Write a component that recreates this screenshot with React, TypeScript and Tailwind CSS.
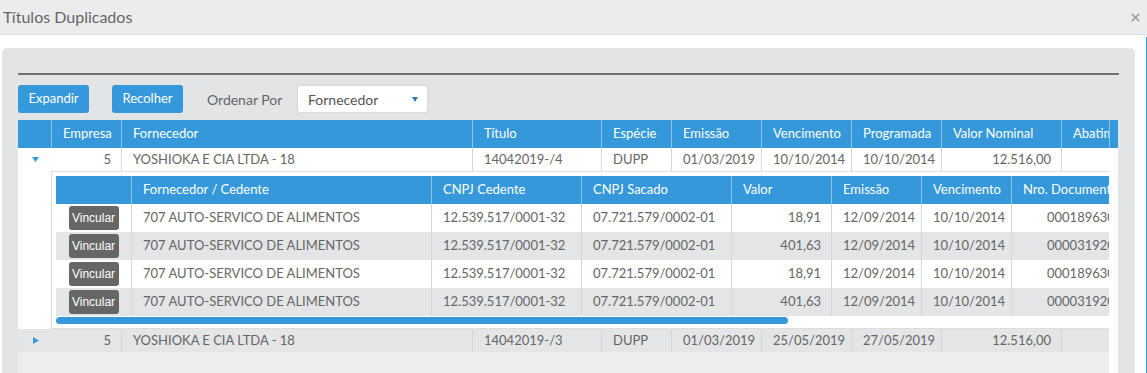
import { X } from "lucide-react";

type Col = { label: string; cls: string; right?: boolean };

const mainCols: Col[] = [
  { label: "", cls: "w-[33px]" },
  { label: "Empresa", cls: "w-[70px]", right: true },
  { label: "Fornecedor", cls: "w-[351px]" },
  { label: "Título", cls: "w-[129px]" },
  { label: "Espécie", cls: "w-[70px]" },
  { label: "Emissão", cls: "w-[90px]" },
  { label: "Vencimento", cls: "w-[90px]" },
  { label: "Programada", cls: "w-[90px]" },
  { label: "Valor Nominal", cls: "w-[120px]", right: true },
  { label: "Abatimento", cls: "w-[90px]" },
];

const innerCols: Col[] = [
  { label: "", cls: "w-[75px]" },
  { label: "Fornecedor / Cedente", cls: "w-[300px]" },
  { label: "CNPJ Cedente", cls: "w-[150px]" },
  { label: "CNPJ Sacado", cls: "w-[150px]" },
  { label: "Valor", cls: "w-[100px]", right: true },
  { label: "Emissão", cls: "w-[90px]" },
  { label: "Vencimento", cls: "w-[90px]" },
  { label: "Nro. Documento", cls: "w-[140px]" },
];

const titulos = [
  {
    expanded: true,
    cells: ["5", "YOSHIOKA E CIA LTDA - 18", "14042019-/4", "DUPP", "01/03/2019", "10/10/2014", "10/10/2014", "12.516,00", ""],
  },
  {
    expanded: false,
    cells: ["5", "YOSHIOKA E CIA LTDA - 18", "14042019-/3", "DUPP", "01/03/2019", "25/05/2019", "27/05/2019", "12.516,00", ""],
  },
];

const duplicados = [
  ["707 AUTO-SERVICO DE ALIMENTOS", "12.539.517/0001-32", "07.721.579/0002-01", "18,91", "12/09/2014", "10/10/2014", "000189630001"],
  ["707 AUTO-SERVICO DE ALIMENTOS", "12.539.517/0001-32", "07.721.579/0002-01", "401,63", "12/09/2014", "10/10/2014", "000031920001"],
  ["707 AUTO-SERVICO DE ALIMENTOS", "12.539.517/0001-32", "07.721.579/0002-01", "18,91", "12/09/2014", "10/10/2014", "000189630001"],
  ["707 AUTO-SERVICO DE ALIMENTOS", "12.539.517/0001-32", "07.721.579/0002-01", "401,63", "12/09/2014", "10/10/2014", "000031920001"],
];

function Caret({ open }: { open: boolean }) {
  return open ? (
    <svg width="7" height="5" viewBox="0 0 7 5" className="fill-[#3498db]">
      <path d="M0 0H7L3.5 5Z" />
    </svg>
  ) : (
    <svg width="6" height="7" viewBox="0 0 6 7" className="fill-[#3498db]">
      <path d="M0 0L6 3.5L0 7Z" />
    </svg>
  );
}

function HeaderRow({ cols }: { cols: Col[] }) {
  return (
    <div className="flex h-[28px] bg-[#3498db] text-white">
      {cols.map((c, i) => (
        <div
          key={i}
          className={`${c.cls} shrink-0 flex items-center px-[11px] whitespace-nowrap overflow-hidden ${
            i > 0 ? "border-l border-[#8cc3ec]" : ""
          }`}
        >
          {c.label}
        </div>
      ))}
    </div>
  );
}

function DetailTable() {
  return (
    <div className="border-t border-l border-b border-[#dddddd] bg-white pt-[4px] pl-[4px] pb-[4px]">
      <HeaderRow cols={innerCols} />
      {duplicados.map((row, r) => (
        <div
          key={r}
          className={`flex h-[28px] ${r % 2 ? "bg-[#e4e5e7]" : "bg-white"}`}
        >
          <div className="w-[75px] shrink-0 flex items-center justify-center">
            <button
              type="button"
              className="h-[24px] w-[50px] rounded-[3px] bg-[#666666] text-white text-[12px] font-['Liberation_Sans',sans-serif]"
            >
              Vincular
            </button>
          </div>
          {row.map((v, i) => {
            const c = innerCols[i + 1];
            return (
              <div
                key={i}
                className={`${c.cls} shrink-0 flex items-center whitespace-nowrap overflow-hidden border-l border-[#d6d6d6] ${
                  c.right ? "justify-end pr-[10px]" : i === 6 ? "pl-[35px]" : "pl-[11px]"
                }`}
              >
                {v}
              </div>
            );
          })}
        </div>
      ))}
      <div className="mt-[1px] h-[7px] w-[732px] rounded-full bg-[#3498db]" />
    </div>
  );
}

function TituloRow({ t, gray }: { t: (typeof titulos)[number]; gray: boolean }) {
  return (
    <div className={`flex h-[23px] ${gray ? "bg-[#e4e5e7]" : "bg-white"}`}>
      <div className="w-[33px] shrink-0 flex items-center justify-center pl-[2px]">
        <Caret open={t.expanded} />
      </div>
      {t.cells.map((v, i) => {
        const c = mainCols[i + 1];
        return (
          <div
            key={i}
            className={`${c.cls} shrink-0 flex items-center whitespace-nowrap overflow-hidden ${
              i > 0 ? "border-l border-[#d6d6d6]" : ""
            } ${c.right ? "justify-end pr-[10px]" : "pl-[11px]"}`}
          >
            {v}
          </div>
        );
      })}
    </div>
  );
}

export default function App() {
  return (
    <div className="h-screen overflow-hidden bg-white font-['Lato',sans-serif] text-[13px] text-[#666666]">
      {/* Title bar */}
      <div className="h-[35px] bg-[#ebecee] border-b border-[#dce0e5] flex items-center justify-between pl-[3px] pr-[5px]">
        <span className="text-[16px] text-[#666666]">Títulos Duplicados</span>
        <X className="w-[13px] h-[13px] text-[#9a9a9a]" strokeWidth={3} />
      </div>

      <div className="pt-[2px] h-full">
        <div className="h-full border-r border-[#3498db] pt-[11px] pl-[2px] pr-[11px]">
          <div className="h-full rounded-t-[5px] bg-[#e3e4e6] pt-[25px] pl-[16px] pr-[17px]">
            <div className="h-[2px] w-[1101px] bg-[#707070]" />

            {/* Toolbar */}
            <div className="mt-[10px] flex items-center h-[28px]">
              <button
                type="button"
                className="h-[28px] w-[71px] rounded-[3px] bg-[#3498db] text-white text-[13px]"
              >
                Expandir
              </button>
              <button
                type="button"
                className="ml-[23px] h-[28px] w-[71px] rounded-[3px] bg-[#3498db] text-white text-[13px]"
              >
                Recolher
              </button>
              <span className="ml-[24px] w-[90px] text-[14px] text-[#666666]">Ordenar Por</span>
              <div className="w-[131px] h-[28px] bg-white border border-[#d9d9d9] rounded-[3px] flex items-center justify-between pl-[10px] pr-[9px] text-[14px] text-[#555555]">
                <span>Fornecedor</span>
                <svg width="6" height="5" viewBox="0 0 6 5" className="fill-[#337ab7]">
                  <path d="M0 0H6L3 5Z" />
                </svg>
              </div>
            </div>

            {/* Grid */}
            <div className="mt-[7px] w-[1100px] bg-white">
              <div className="flex">
                <div className="w-[1091px] overflow-hidden">
                  <HeaderRow cols={mainCols} />
                </div>
                <div className="w-[9px] bg-[#3498db] border-l border-[#8cc3ec]" />
              </div>
              <div className="flex">
                <div className="w-[1091px] overflow-hidden bg-[#ededed]">
                  <div className="w-[1200px]">
                    <TituloRow t={titulos[0]} gray={false} />
                    <div className="flex bg-white">
                      <div className="w-[33px] shrink-0" />
                      <div className="flex-1 min-w-0">
                        <DetailTable />
                      </div>
                    </div>
                    <TituloRow t={titulos[1]} gray={true} />
                    <div className="h-[120px]" />
                  </div>
                </div>
                <div className="w-[9px] bg-white" />
              </div>
            </div>
          </div>
        </div>
      </div>
    </div>
  );
}
